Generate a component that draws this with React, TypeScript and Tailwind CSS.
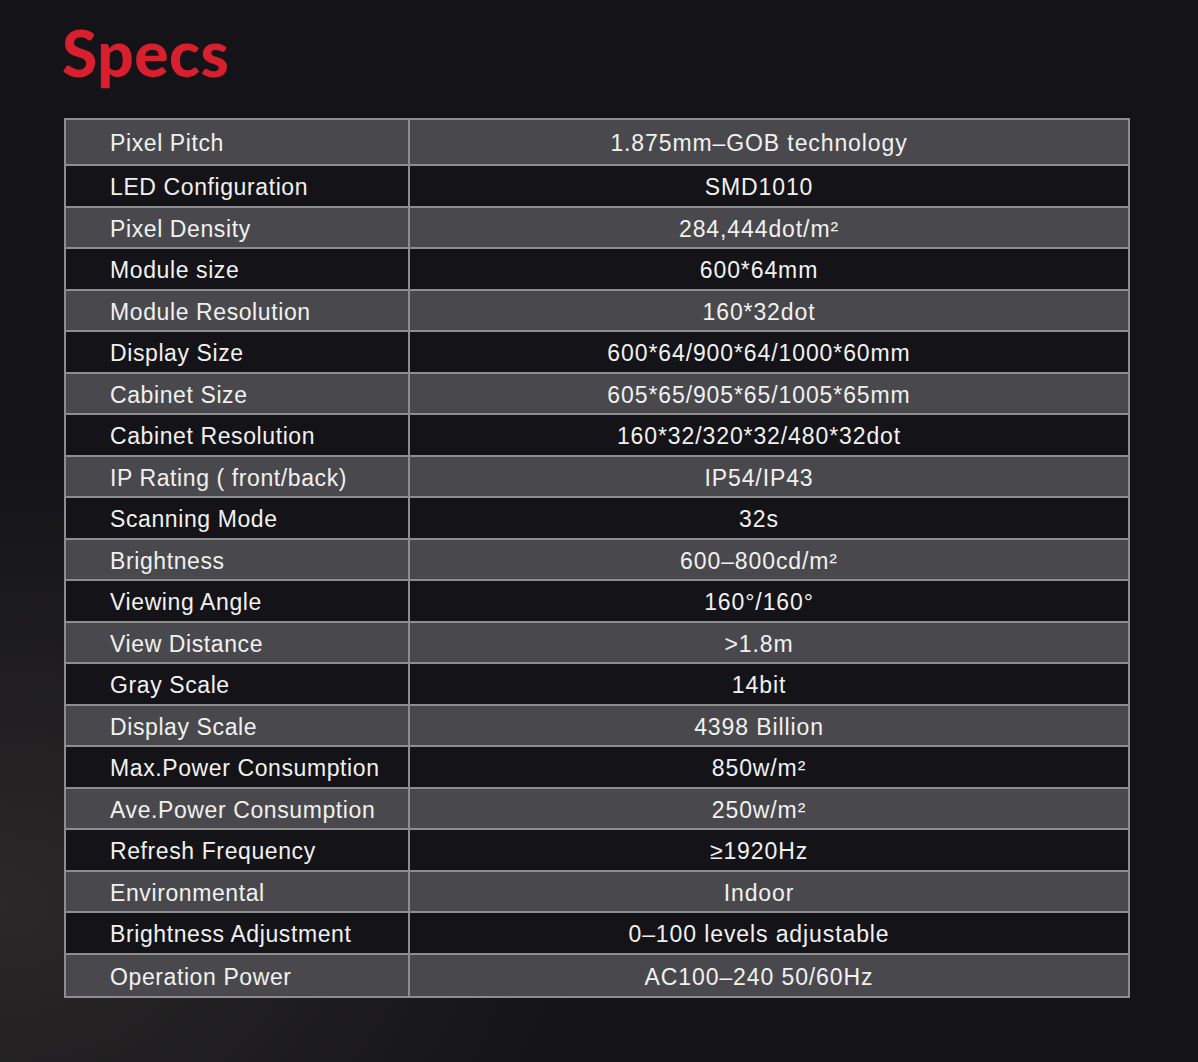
import React from "react";

const specs: [string, string][] = [
  ["Pixel Pitch", "1.875mm–GOB technology"],
  ["LED Configuration", "SMD1010"],
  ["Pixel Density", "284,444dot/m²"],
  ["Module size", "600*64mm"],
  ["Module Resolution", "160*32dot"],
  ["Display Size", "600*64/900*64/1000*60mm"],
  ["Cabinet Size", "605*65/905*65/1005*65mm"],
  ["Cabinet Resolution", "160*32/320*32/480*32dot"],
  ["IP Rating ( front/back)", "IP54/IP43"],
  ["Scanning Mode", "32s"],
  ["Brightness", "600–800cd/m²"],
  ["Viewing Angle", "160°/160°"],
  ["View Distance", ">1.8m"],
  ["Gray Scale", "14bit"],
  ["Display Scale", "4398 Billion"],
  ["Max.Power Consumption", "850w/m²"],
  ["Ave.Power Consumption", "250w/m²"],
  ["Refresh Frequency", "≥1920Hz"],
  ["Environmental", "Indoor"],
  ["Brightness Adjustment", "0–100 levels adjustable"],
  ["Operation Power", "AC100–240 50/60Hz"],
];

const App = () => {
  return (
    <div className="h-[1062px] w-full overflow-hidden bg-[#141317] bg-[radial-gradient(ellipse_at_0%_85%,#2a2828_0%,#141317_35%)] font-['Liberation_Sans',Arial,sans-serif]">
      <div className="pl-[62px] pt-[16px]">
        <h1 className="font-['Lato',sans-serif] text-[64px] font-black leading-[74px] tracking-[0.5px] text-[#d71f2e]">
          Specs
        </h1>
      </div>
      <div className="ml-[64px] mt-[28px] w-[1066px] border-2 border-[#8d8d8f]">
        {specs.map(([label, value], i) => (
          <div
            key={label}
            className={`flex text-[23px] text-[#f1f1f1] ${
              i === 0 ? "h-[46px]" : "h-[41.5px]"
            } ${i % 2 === 0 ? "bg-[#49494d]" : "bg-[#141317]"} ${
              i < specs.length - 1 ? "border-b-2 border-[#8d8d8f]" : ""
            }`}
          >
            <div className="flex w-[344px] shrink-0 items-center border-r-2 border-[#8d8d8f] pl-[44px] pt-[3px] tracking-[0.6px]">
              {label}
            </div>
            <div className="flex flex-1 items-center justify-center pr-[20px] pt-[3px] tracking-[0.9px]">
              {value}
            </div>
          </div>
        ))}
      </div>
    </div>
  );
};

export default App;
